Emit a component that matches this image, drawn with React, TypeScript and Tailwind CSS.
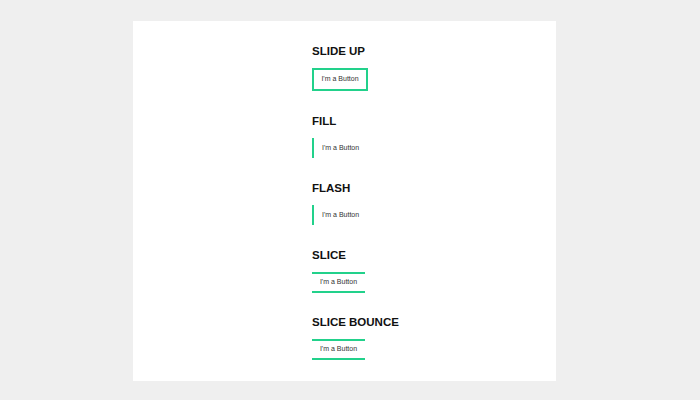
import React from "react";

const green = "border-[#22d18b]";

function Heading({ children }: { children: React.ReactNode }) {
  return (
    <h2 className="pt-[1px] text-[11.5px] leading-[18px] font-bold text-[#111]" style={{ fontFamily: '"Liberation Sans", Arial, sans-serif' }}>
      {children}
    </h2>
  );
}

const btnText = "text-[7px] text-[#333] whitespace-nowrap";

export default function App() {
  return (
    <div className="w-[700px] h-[400px] bg-[#efefef] pt-[21px]" style={{ fontFamily: '"Liberation Sans", Arial, sans-serif' }}>
      <div className="ml-[133px] w-[423px] h-[360px] bg-white pt-[20px] pl-[179px] flex flex-col">
        <Heading>SLIDE UP</Heading>
        <div className={`mt-[8px] w-[56px] h-[23px] border-2 ${green} flex items-center justify-center ${btnText}`}>
          I'm a Button
        </div>

        <div className="mt-[20px]">
          <Heading>FILL</Heading>
        </div>
        <div className={`mt-[8px] w-[56px] h-[20px] border-l-2 ${green} flex items-center pl-[8px] ${btnText}`}>
          I'm a Button
        </div>

        <div className="mt-[20px]">
          <Heading>FLASH</Heading>
        </div>
        <div className={`mt-[8px] w-[56px] h-[20px] border-l-2 ${green} flex items-center pl-[8px] ${btnText}`}>
          I'm a Button
        </div>

        <div className="mt-[20px]">
          <Heading>SLICE</Heading>
        </div>
        <div className={`mt-[8px] w-[53px] h-[21px] border-y-2 ${green} flex items-center justify-center ${btnText}`}>
          I'm a Button
        </div>

        <div className="mt-[19px]">
          <Heading>SLICE BOUNCE</Heading>
        </div>
        <div className={`mt-[8px] w-[53px] h-[21px] border-y-2 ${green} flex items-center justify-center ${btnText}`}>
          I'm a Button
        </div>
      </div>
    </div>
  );
}
